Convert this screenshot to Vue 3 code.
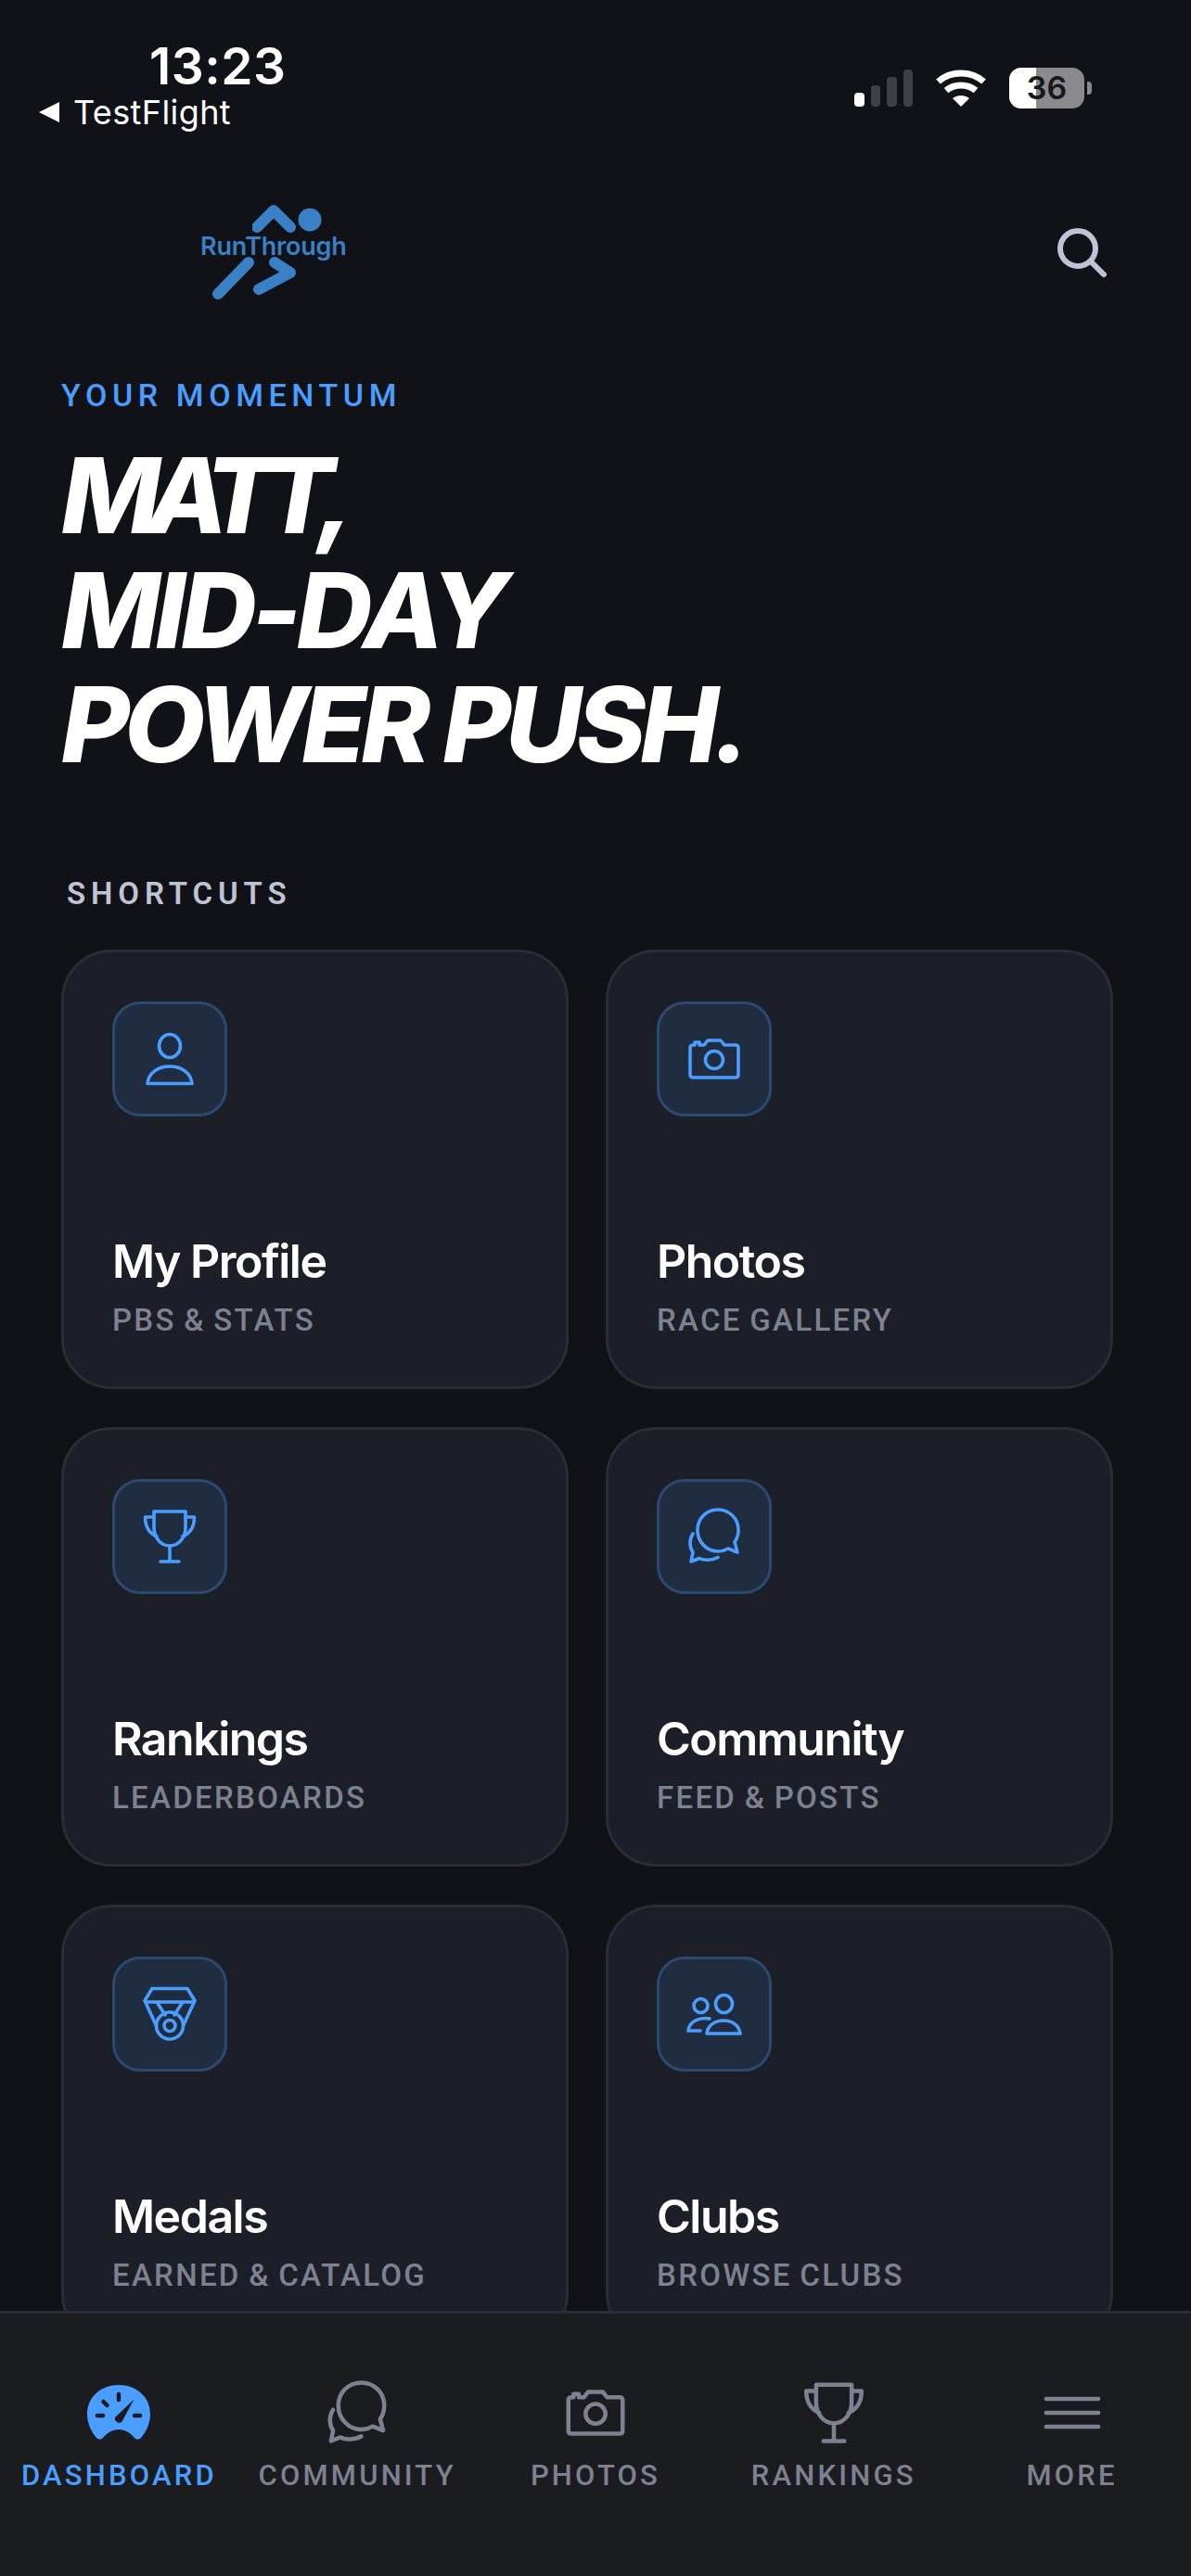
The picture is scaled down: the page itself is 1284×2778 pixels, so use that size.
<script setup>
const icons = {
  person: [
    'M32 5.5c6.4 0 11.5 5.6 11.5 12.5S38.400 30.500 32 30.500 20.500 24.900 20.500 18 25.600 5.500 32 5.500Z',
    'M8 58.500C9 47.500 19 40 32 40s23 7.500 24 18.500Z',
  ],
  camera: [
    'M6 20q0-3 3-3h2v-3h5v3h5l4-5h14l4 5h12q3 0 3 3v29q0 3-3 3H9q-3 0-3-3Z',
    'M32 23.500a9.500 9.500 0 1 0 0 19 9.500 9.500 0 0 0 0-19Z',
  ],
  trophy: [
    'M15 5h34v17c0 11-7 20-17 20s-17-9-17-20Z',
    'M32 42v16M22 59h20',
    'M15 11H5.500c0 9 3.500 17 12.500 21M49 11h9.500c0 9-3.500 17-12.500 21',
  ],
  chat: [
    'M36 3c12 0 22 9.500 22 22 0 5-1.500 9.500-4 13l3 11-10-4c-3.500 2-7 3-11 3-12 0-22-10-22-23S24 3 36 3Z',
    'M9 29c-4 6-4 14 0 20l-2 10 9-3.500c5 2.500 14 2.500 20-1',
  ],
  medal: [
    'M13 4.500h38l8 13-12 26M17 43.500 5 17.500l8-13M7 19h50M18 19l9 14M46 19 37 33',
    'M32 30a14.500 14.500 0 1 0 0 29 14.500 14.500 0 0 0 0-29Z',
    'M32 38.500a6 6 0 1 0 0 12 6 6 0 0 0 0-12Z',
  ],
  clubs: [
    'M42.500 11.500c5 0 9 4.300 9 9.500s-4 9.500-9 9.500-9-4.300-9-9.500 4-9.500 9-9.500Z',
    'M17.500 15.500c4.100 0 7.500 3.400 7.500 7.500s-3.400 7.500-7.500 7.500S10 27.100 10 23s3.400-7.500 7.500-7.500Z',
    'M24 53c1-9 9-14 18-14s17 5 18 14Z',
    'M27 37c-11-2-22 3-23 13h13',
  ],
  menu: ['M7 18.700h50M7 32h50M7 45.300h50'],
}

const shortcuts = [
  { title: 'My Profile', sub: 'PBS & STATS', icon: 'person' },
  { title: 'Photos', sub: 'RACE GALLERY', icon: 'camera' },
  { title: 'Rankings', sub: 'LEADERBOARDS', icon: 'trophy' },
  { title: 'Community', sub: 'FEED & POSTS', icon: 'chat' },
  { title: 'Medals', sub: 'EARNED & CATALOG', icon: 'medal' },
  { title: 'Clubs', sub: 'BROWSE CLUBS', icon: 'clubs' },
]

const tabs = [
  { label: 'DASHBOARD', icon: 'gauge', active: true },
  { label: 'COMMUNITY', icon: 'chat' },
  { label: 'PHOTOS', icon: 'camera' },
  { label: 'RANKINGS', icon: 'trophy' },
  { label: 'MORE', icon: 'menu' },
]
</script>

<template>
  <div class="phone">
    <div class="status">
      <div class="status-left">
        <div class="time">13:23</div>
        <div class="back"><span class="back-arrow"></span>TestFlight</div>
      </div>
      <div class="status-right">
        <div class="signal">
          <span class="bar on"></span>
          <span class="bar b2"></span>
          <span class="bar b3"></span>
          <span class="bar b4"></span>
        </div>
        <svg class="wifi" width="54" height="40" viewBox="0 0 54 40" fill="none" stroke="#fff" stroke-width="7">
          <path d="M2.500 13C16 1 38 1 51.500 13" />
          <path d="M11 22.500c9-7.500 23-7.500 32 0" />
          <path d="M27 40 18 31c5-4 13-4 18 0Z" fill="#fff" stroke="none" />
        </svg>
        <div class="battery">
          <div class="battery-body">
            <span class="battery-fill"></span>
            <span class="battery-num">36</span>
          </div>
          <span class="battery-nub"></span>
        </div>
      </div>
    </div>

    <header class="top">
      <div class="logo">
        <svg class="logo-top" width="80" height="36" viewBox="0 0 80 36" fill="none" stroke="#3a80c6" stroke-width="12" stroke-linecap="round" stroke-linejoin="round">
          <path d="M5 25 23 7l18 18" />
          <circle cx="62" cy="17" r="12.500" fill="#3a80c6" stroke="none" />
        </svg>
        <div class="logo-text">RunThrough</div>
        <svg class="logo-legs" width="96" height="48" viewBox="0 0 96 48" fill="none" stroke="#3a80c6" stroke-width="12" stroke-linecap="round" stroke-linejoin="round">
          <path d="M40 6 7 40" />
          <path d="M68 6l17 11-34 18" />
        </svg>
      </div>
      <svg class="search" width="56" height="56" viewBox="0 0 56 56" fill="none" stroke="#bfc3d4" stroke-width="6" stroke-linecap="round">
        <circle cx="24" cy="23" r="19" />
        <path d="m38 37 14 14" />
      </svg>
    </header>

    <main class="content">
      <div class="eyebrow">YOUR MOMENTUM</div>
      <h1 class="headline">
        <span class="line-matt">MATT,</span>
        <span class="line-mid">MID-DAY</span>
        <span class="line-power">POWER PUSH.</span>
      </h1>
      <div class="section-label">SHORTCUTS</div>
      <div class="grid">
        <div v-for="s in shortcuts" :key="s.title" class="card">
          <div class="icon-box">
            <svg width="64" height="64" viewBox="0 0 64 64" fill="none" stroke="#4a9eff" stroke-width="3.600" stroke-linecap="round" stroke-linejoin="round">
              <path v-for="d in icons[s.icon]" :key="d" :d="d" />
            </svg>
          </div>
          <div>
            <div class="card-title">{{ s.title }}</div>
            <div class="card-sub">{{ s.sub }}</div>
          </div>
        </div>
      </div>
    </main>

    <nav class="tabbar">
      <div v-for="t in tabs" :key="t.label" class="tab" :class="{ active: t.active }">
        <svg v-if="t.icon === 'gauge'" width="72" height="72" viewBox="-2 -6 72 72">
          <path fill="#4a9eff" d="M34 0c19 0 34 13 34 31 0 10-4 19-10 26-2 2-5 2-7 0-4-5-10-9-17-9s-13 4-17 9c-2 2-5 2-7 0C4 50 0 41 0 31 0 13 15 0 34 0Z" />
          <path fill="none" stroke="#1b1c20" stroke-width="4.500" stroke-linecap="round" d="M34 10v6M17.500 18l4 4M11 33h6M51 33h6" />
          <path fill="#1b1c20" d="M50.500 15.500 37.500 39.500a4.600 4.600 0 0 1-7.500-4.500Z" />
        </svg>
        <svg v-else width="72" height="72" viewBox="0 0 64 64" fill="none" stroke="#7e8190" stroke-width="4" stroke-linecap="round" stroke-linejoin="round">
          <path v-for="d in icons[t.icon]" :key="d" :d="d" />
        </svg>
        <span class="tab-label">{{ t.label }}</span>
      </div>
    </nav>
  </div>
</template>

<style>
html, body {
  margin: 0;
  background: #101217;
}
</style>

<style scoped>
.phone {
  width: 1284px;
  height: 2778px;
  display: flex;
  flex-direction: column;
  background: #101217;
  color: #fff;
  font-family: Inter, "Liberation Sans", sans-serif;
  overflow: hidden;
}

.status {
  height: 148px;
  flex: none;
  display: flex;
  justify-content: space-between;
  align-items: flex-start;
  box-sizing: border-box;
  padding: 40px 107px 0 42px;
}
.time {
  font-size: 55px;
  font-weight: 600;
  line-height: 62px;
  letter-spacing: 0.500px;
  margin-left: 119px;
}
.back {
  display: flex;
  align-items: center;
  gap: 15px;
  margin-top: -2px;
  font-size: 36px;
  line-height: 42px;
  letter-spacing: 0.400px;
}
.back-arrow {
  width: 0;
  height: 0;
  border-top: 11px solid transparent;
  border-bottom: 11px solid transparent;
  border-right: 22px solid #fff;
}
.status-right {
  display: flex;
  align-items: center;
  margin-top: 33px;
}
.signal {
  display: flex;
  align-items: flex-end;
  gap: 7px;
  height: 40px;
}
.bar {
  width: 10.500px;
  border-radius: 4px;
  background: #3f4046;
}
.bar.on {
  height: 15px;
  background: #fff;
}
.bar.b2 { height: 23px; }
.bar.b3 { height: 32px; }
.bar.b4 { height: 40px; }
.wifi {
  margin-left: 25px;
}
.battery {
  display: flex;
  align-items: center;
  margin-left: 25px;
}
.battery-body {
  position: relative;
  width: 81px;
  height: 44px;
  border-radius: 13px;
  background: #8a8a8c;
  overflow: hidden;
  text-align: center;
}
.battery-fill {
  position: absolute;
  left: 0;
  top: 0;
  bottom: 0;
  width: 29px;
  background: #fff;
}
.battery-num {
  position: relative;
  font-size: 34px;
  font-weight: 600;
  line-height: 44px;
  color: #17181b;
}
.battery-nub {
  width: 5px;
  height: 14px;
  margin-left: 3px;
  border-radius: 0 4px 4px 0;
  background: #8a8a8c;
}

.top {
  height: 258px;
  flex: none;
  box-sizing: border-box;
  display: flex;
  justify-content: space-between;
  align-items: flex-start;
  padding: 72px 90px 0 216px;
}
.logo {
  display: flex;
  flex-direction: column;
  width: 158px;
}
.logo-top {
  margin-left: 56px;
}
.logo-text {
  margin-top: -2px;
  font-size: 27px;
  font-weight: 600;
  line-height: 24px;
  letter-spacing: -0.200px;
  color: #3a80c6;
  white-space: nowrap;
}
.logo-legs {
  margin-left: 12px;
  margin-top: -1px;
}
.search {
  margin-top: 25px;
}

.content {
  flex: 1;
  min-height: 0;
  overflow: hidden;
  padding: 0 84px 0 66px;
}
.eyebrow {
  font-family: Roboto, sans-serif;
  font-size: 34px;
  font-weight: 500;
  line-height: 40px;
  letter-spacing: 5.600px;
  color: #4a9eff;
}
.headline {
  margin: 27px 0 0;
  font-size: 113px;
  font-weight: 800;
  font-style: italic;
  line-height: 123.500px;
}
.headline span {
  display: block;
}
.line-matt {
  letter-spacing: -14px;
}
.line-mid {
  letter-spacing: -5px;
}
.line-power {
  letter-spacing: -5.800px;
}
.section-label {
  margin: 100px 0 0 6px;
  font-family: Roboto, sans-serif;
  font-size: 33px;
  font-weight: 600;
  line-height: 40px;
  letter-spacing: 5.900px;
  color: #bfc3d4;
}
.grid {
  display: grid;
  grid-template-columns: 1fr 1fr;
  column-gap: 40px;
  row-gap: 41px;
  margin-top: 40px;
}
.card {
  height: 474px;
  box-sizing: border-box;
  padding: 53px 52px 52px;
  display: flex;
  flex-direction: column;
  justify-content: space-between;
  background: #1c1f28;
  border: 3px solid #2a2d36;
  border-radius: 54px;
}
.icon-box {
  width: 124px;
  height: 124px;
  box-sizing: border-box;
  display: flex;
  align-items: center;
  justify-content: center;
  background: #202d40;
  border: 3px solid #2c4a70;
  border-radius: 30px;
}
.card-title {
  font-size: 50px;
  font-weight: 600;
  line-height: 60px;
  letter-spacing: -1.500px;
}
.card-sub {
  margin-top: 15px;
  font-family: Roboto, sans-serif;
  font-size: 33px;
  font-weight: 500;
  line-height: 38px;
  letter-spacing: 2.300px;
  word-spacing: -2px;
  color: #7e8190;
}

.tabbar {
  height: 286px;
  flex: none;
  display: grid;
  grid-template-columns: repeat(5, 1fr);
  box-sizing: border-box;
  padding-top: 71px;
  background: #1b1c20;
  border-top: 3px solid #2a2d36;
}
.tab {
  display: flex;
  flex-direction: column;
  align-items: center;
  color: #7e8190;
}
.tab-label {
  margin-top: 13px;
  font-family: Roboto, sans-serif;
  font-size: 31px;
  font-weight: 500;
  line-height: 38px;
  letter-spacing: 3.200px;
}
.tab.active .tab-label {
  color: #4a9eff;
}
</style>
